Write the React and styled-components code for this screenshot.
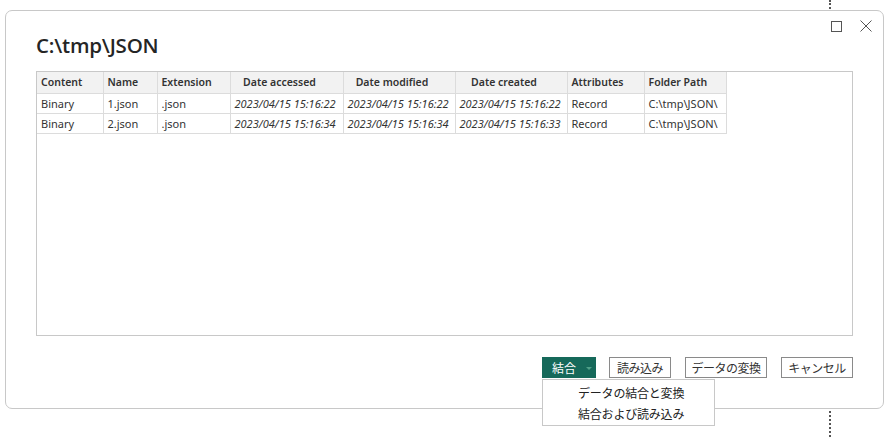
import React from "react";
import styled, { createGlobalStyle } from "styled-components";

const GlobalStyle = createGlobalStyle`
  html, body {
    margin: 0;
    padding: 0;
    background: #fff;
  }
  body {
    font-family: "Noto Sans", "Open Sans", "Noto Sans CJK JP", sans-serif;
    color: #222;
  }
`;

const Page = styled.div`
  position: relative;
  width: 886px;
  height: 437px;
  padding: 10px 2px 0 5px;
  box-sizing: border-box;
  overflow: hidden;
`;

const DottedLine = styled.div`
  position: absolute;
  left: 829px;
  top: 0;
  width: 0;
  height: 437px;
  border-left: 2px dotted #555;
`;

const Dialog = styled.div`
  position: relative;
  width: 879px;
  height: 399px;
  box-sizing: border-box;
  background: #fff;
  border: 1px solid #c8c8c8;
  border-radius: 7px;
  padding: 22px 30px 0 30px;
  display: flex;
  flex-direction: column;
`;

const WindowControls = styled.div`
  position: absolute;
  top: 7px;
  right: 9px;
  display: flex;
  align-items: center;
  gap: 14px;
`;

const ControlBtn = styled.button`
  width: 16px;
  height: 16px;
  padding: 0;
  border: none;
  background: none;
  display: flex;
  align-items: center;
  justify-content: center;
  color: #555;
`;

const Title = styled.h1`
  margin: 0 0 13px 0;
  height: 25px;
  font-size: 20.5px;
  font-weight: 550;
  line-height: 25px;
  color: #252525;
  font-family: "Open Sans", "Noto Sans", sans-serif;
  letter-spacing: -0.2px;
`;

const TableBox = styled.div`
  height: 265px;
  box-sizing: border-box;
  border: 1px solid #c8c8c8;
`;

const Table = styled.table`
  border-collapse: collapse;
  table-layout: fixed;
  width: 689px;
  font-size: 11px;
  color: #333;
`;

const Th = styled.th`
  width: ${(p) => p.$w}px;
  height: 21px;
  box-sizing: border-box;
  padding: 0 ${(p) => (p.$center ? 14 : 0)}px 0 ${(p) => (p.$center ? 0 : 4)}px;
  text-align: ${(p) => (p.$center ? "center" : "left")};
  font-size: 10.5px;
  font-weight: 600;
  background: #f2f2f2;
  border-right: 1px solid #dcdcdc;
  border-bottom: 1px solid #dcdcdc;
  white-space: nowrap;
`;

const Td = styled.td`
  height: 20px;
  box-sizing: border-box;
  padding: 0 0 0 4px;
  font-style: ${(p) => (p.$italic ? "italic" : "normal")};
  border-right: 1px solid #dcdcdc;
  border-bottom: 1px solid #dcdcdc;
  white-space: nowrap;
  overflow: hidden;
`;

const Footer = styled.div`
  display: flex;
  justify-content: flex-end;
  gap: 14px;
  margin-top: 21px;
`;

const SplitWrap = styled.div`
  position: relative;
  margin-right: -1px;
`;

const PrimaryBtn = styled.button`
  width: 54px;
  height: 21px;
  padding: 0 0 0 10px;
  border: none;
  background: #16695a;
  color: #fff;
  font-family: "Noto Sans CJK JP", sans-serif;
  font-size: 12px;
  display: flex;
  align-items: center;
  gap: 10px;
`;

const Caret = styled.span`
  width: 0;
  height: 0;
  border-left: 3px solid transparent;
  border-right: 3px solid transparent;
  border-top: 3px solid #4fa088;
  margin-top: 1px;
`;

const Btn = styled.button`
  width: ${(p) => p.$w}px;
  height: 21px;
  padding: 0;
  border: 1px solid #8a8a8a;
  background: #fff;
  color: #333;
  font-family: "Noto Sans CJK JP", sans-serif;
  font-size: 12px;
  letter-spacing: -0.5px;
`;

const Menu = styled.div`
  position: absolute;
  top: 22px;
  left: 0;
  width: 173px;
  height: 47px;
  box-sizing: border-box;
  background: #fff;
  border: 1px solid #c8c8c8;
  padding-top: 3px;
  z-index: 2;
`;

const MenuItem = styled.div`
  height: 20px;
  line-height: 20px;
  padding-left: 35px;
  font-family: "Noto Sans CJK JP", sans-serif;
  font-size: 12px;
  color: #222;
  letter-spacing: -0.2px;
  white-space: nowrap;
  & + & {
    margin-top: 1px;
  }
`;

const columns = [
  { name: "Content", w: 66 },
  { name: "Name", w: 54 },
  { name: "Extension", w: 73 },
  { name: "Date accessed", w: 113, center: true },
  { name: "Date modified", w: 112, center: true },
  { name: "Date created", w: 112, center: true },
  { name: "Attributes", w: 77 },
  { name: "Folder Path", w: 82 },
];

const rows = [
  ["Binary", "1.json", ".json", "2023/04/15 15:16:22", "2023/04/15 15:16:22", "2023/04/15 15:16:22", "Record", "C:\\tmp\\JSON\\"],
  ["Binary", "2.json", ".json", "2023/04/15 15:16:34", "2023/04/15 15:16:34", "2023/04/15 15:16:33", "Record", "C:\\tmp\\JSON\\"],
];

export default function App() {
  return (
    <>
      <GlobalStyle />
      <Page>
        <DottedLine />
        <Dialog>
          <WindowControls>
            <ControlBtn aria-label="maximize">
              <svg width="11" height="11" viewBox="0 0 11 11">
                <rect x="0.5" y="0.5" width="10" height="10" fill="none" stroke="#555" strokeWidth="1" />
              </svg>
            </ControlBtn>
            <ControlBtn aria-label="close">
              <svg width="12" height="12" viewBox="0 0 12 12">
                <path d="M0.5 0.5 L11.5 11.5 M11.5 0.5 L0.5 11.5" stroke="#555" strokeWidth="1" />
              </svg>
            </ControlBtn>
          </WindowControls>
          <Title>C:\tmp\JSON</Title>
          <TableBox>
            <Table>
              <thead>
                <tr>
                  {columns.map((c) => (
                    <Th key={c.name} $w={c.w} $center={c.center}>
                      {c.name}
                    </Th>
                  ))}
                </tr>
              </thead>
              <tbody>
                {rows.map((r, i) => (
                  <tr key={i}>
                    {r.map((v, j) => (
                      <Td key={j} $italic={j >= 3 && j <= 5}>
                        {v}
                      </Td>
                    ))}
                  </tr>
                ))}
              </tbody>
            </Table>
          </TableBox>
          <Footer>
            <SplitWrap>
              <PrimaryBtn>
                結合
                <Caret />
              </PrimaryBtn>
              <Menu>
                <MenuItem>データの結合と変換</MenuItem>
                <MenuItem>結合および読み込み</MenuItem>
              </Menu>
            </SplitWrap>
            <Btn $w={62}>読み込み</Btn>
            <Btn $w={82}>データの変換</Btn>
            <Btn $w={72}>キャンセル</Btn>
          </Footer>
        </Dialog>
      </Page>
    </>
  );
}
